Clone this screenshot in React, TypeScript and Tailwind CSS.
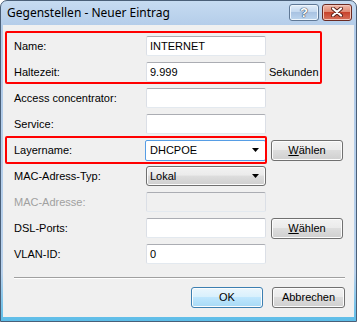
import React from 'react'

const boxBorder =
  'border border-t-[#abadb3] border-l-[#dbdfe6] border-r-[#dbdfe6] border-b-[#e3e9ef] rounded-[2px]'

function TextBox({ value, disabled }: { value?: string; disabled?: boolean }) {
  return (
    <div
      className={`h-[20px] w-[120px] ${boxBorder} px-[3px] flex items-center ${
        disabled ? 'bg-[#f0f0f0]' : 'bg-white'
      }`}
    >
      {value}
    </div>
  )
}

function Arrow() {
  return (
    <svg width="7" height="4" viewBox="0 0 7 4" className="shrink-0">
      <path d="M0 0h7L3.5 4z" fill="#000" />
    </svg>
  )
}

function Button({ children, primary, w }: { children: React.ReactNode; primary?: boolean; w: string }) {
  return (
    <div
      className={`${w} h-[21px] rounded-[3px] border flex items-center justify-center shadow-[inset_0_0_0_1px_#fcfcfc] ${
        primary
          ? 'border-[#3c7fb1] bg-[linear-gradient(#eaf6fd_0%,#d9f0fc_45%,#bee6fd_50%,#a7d9f5_100%)]'
          : 'border-[#707070] bg-[linear-gradient(#f2f2f2_0%,#ebebeb_45%,#dddddd_50%,#cfcfcf_100%)]'
      }`}
    >
      {children}
    </div>
  )
}

function Row({ label, children, muted }: { label: string; children: React.ReactNode; muted?: boolean }) {
  return (
    <div className="h-[26px] flex items-center">
      <div className={`w-[132px] shrink-0 ${muted ? 'text-[#a0a0a0]' : 'text-black'}`}>{label}</div>
      {children}
    </div>
  )
}

function Waehlen() {
  return (
    <Button w="w-[72px] ml-[5px]">
      <span>
        <span className="underline">W</span>ählen
      </span>
    </Button>
  )
}

export default function App() {
  return (
    <div className="w-[357px] h-[322px] rounded-t-[7px] border border-[#4a5f78] bg-[linear-gradient(#c6dbf1_0%,#b0cae8_30px,#b8d1ec_85%,#5cbde8_100%)] flex flex-col font-['Liberation_Sans',Arial,sans-serif] text-[11px] text-black overflow-hidden">
      {/* title bar */}
      <div className="h-[24px] shrink-0 flex items-center pl-[6px] pr-[4px]">
        <div className="flex-1 text-[12px] font-['Noto_Sans',sans-serif] text-black -mt-[1px]">
          Gegenstellen - Neuer Eintrag
        </div>
        <div className="flex gap-[3px] items-center -mt-[2px]">
          <div className="w-[30px] h-[17px] rounded-[3px] border border-[#5f7896] bg-[linear-gradient(#e3eefa_0%,#c4d8ef_45%,#a9c3e2_50%,#bcd5ee_100%)] flex items-center justify-center shadow-[inset_0_0_0_1px_#eef5fc]">
            <span className="text-[13px] font-bold text-white leading-none [text-shadow:0_0_1px_#304560,0_0_1px_#304560,0_0_1px_#304560]">
              ?
            </span>
          </div>
          <div className="w-[30px] h-[17px] rounded-[3px] border border-[#6b2a22] bg-[linear-gradient(#f0b8a8_0%,#df8a74_45%,#c8432c_50%,#d6705a_100%)] flex items-center justify-center shadow-[inset_0_0_0_1px_#f4c7bb]">
            <svg width="12" height="10" viewBox="0 0 12 10">
              <path d="M2 1.5l8 7M10 1.5l-8 7" stroke="#5a2118" strokeWidth="4" strokeLinecap="round" />
              <path d="M2 1.5l8 7M10 1.5l-8 7" stroke="#fff" strokeWidth="2.2" strokeLinecap="round" />
            </svg>
          </div>
        </div>
      </div>

      {/* client area */}
      <div className="relative flex-1 mx-[2px] mb-[4px] bg-[#f0f0f0] pl-[11px] pt-[8px]">
        <Row label="Name:">
          <TextBox value="INTERNET" />
        </Row>
        <Row label="Haltezeit:">
          <TextBox value="9.999" />
          <span className="ml-[3px]">Sekunden</span>
        </Row>
        <Row label="Access concentrator:">
          <TextBox />
        </Row>
        <Row label="Service:">
          <TextBox />
        </Row>
        <Row label="Layername:">
          <div className="h-[21px] w-[121px] -ml-[1px] border border-[#569de5] rounded-[2px] bg-white flex items-center pl-[4px] pr-[6px]">
            <span className="flex-1">DHCPOE</span>
            <Arrow />
          </div>
          <Waehlen />
        </Row>
        <Row label="MAC-Adress-Typ:">
          <div className="h-[20px] w-[120px] rounded-[3px] border border-[#707070] bg-[linear-gradient(#f2f2f2_0%,#ebebeb_45%,#dddddd_50%,#cfcfcf_100%)] shadow-[inset_0_0_0_1px_#fcfcfc] flex items-center pl-[3px] pr-[6px]">
            <span className="flex-1">Lokal</span>
            <Arrow />
          </div>
        </Row>
        <Row label="MAC-Adresse:" muted>
          <TextBox disabled />
        </Row>
        <Row label="DSL-Ports:">
          <TextBox />
          <Waehlen />
        </Row>
        <Row label="VLAN-ID:">
          <TextBox value="0" />
        </Row>

        <div className="mt-[10px] mr-[9px] border-t border-t-[#a0a0a0] border-b border-b-white" />

        <div className="mt-[8px] mr-[9px] flex justify-end gap-[9px]">
          <Button primary w="w-[72px]">
            OK
          </Button>
          <Button w="w-[73px]">Abbrechen</Button>
        </div>

        {/* red annotation frames */}
        <div className="pointer-events-none absolute left-[2px] top-[6px] w-[317px] h-[53px] border-2 border-[#ff0000] rounded-[2px]" />
        <div className="pointer-events-none absolute left-[2px] top-[111px] w-[262px] h-[28px] border-2 border-[#ff0000] rounded-[2px]" />
      </div>
    </div>
  )
}
